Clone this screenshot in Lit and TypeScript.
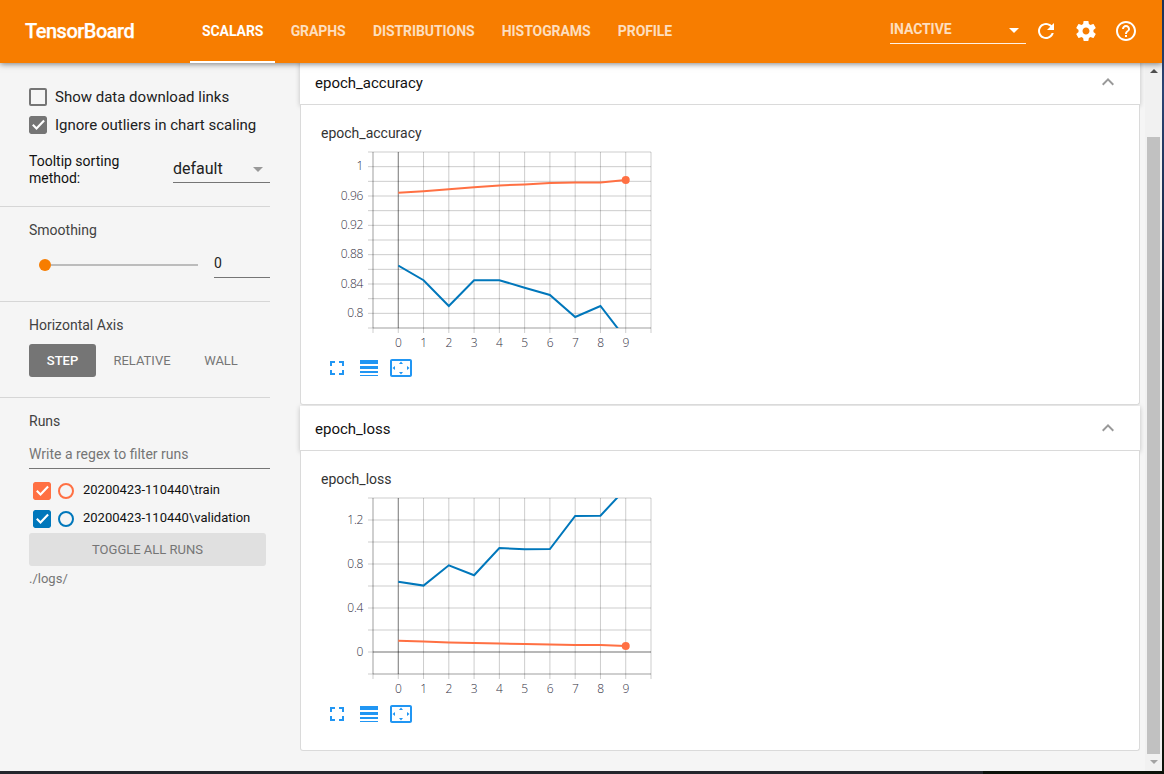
import { LitElement, html, css, svg } from "lit";
import { customElement, property, state } from "lit/decorators.js";
import { classMap } from "lit/directives/class-map.js";

type Series = { color: string; points: number[]; dot?: boolean };
type Chart = { title: string; yTicks: { label: string; y: number }[]; step: number; zero?: number; series: Series[] };

const ORANGE = "#ff7043";
const BLUE = "#0077bb";

const CHARTS: Chart[] = [
  {
    title: "epoch_accuracy",
    step: 176 / 12,
    yTicks: ["1", "0.96", "0.92", "0.88", "0.84", "0.8"].map((label, i) => ({ label, y: (176 / 12) * (1 + i * 2) })),
    series: [
      { color: BLUE, points: [113.5, 128.2, 154, 128.2, 128.2, 135.7, 143, 165, 154, 186.7] },
      { color: ORANGE, points: [40.7, 39.2, 37.2, 35.2, 33.4, 32.4, 30.9, 30.4, 30.6, 28], dot: true },
    ],
  },
  {
    title: "epoch_loss",
    step: 22,
    zero: 154,
    yTicks: ["1.2", "0.8", "0.4", "0"].map((label, i) => ({ label, y: 22 + i * 44 })),
    series: [
      { color: BLUE, points: [83.7, 87.6, 67.3, 77.3, 50, 51.3, 51, 18, 17.7, -9.4] },
      { color: ORANGE, points: [142.7, 143.6, 144.4, 145, 145.5, 146, 146.5, 147, 147, 148], dot: true },
    ],
  },
];

const DX = 278 / 11;

@customElement("line-chart")
class LineChart extends LitElement {
  @property({ attribute: false }) chart!: Chart;
  static styles = css`
    :host { display: block; }
    svg { display: block; }
    text { font: 300 12px "Open Sans", sans-serif; fill: #32313f; letter-spacing: -0.3px; }
    .grid { stroke: #000; stroke-opacity: 0.2; stroke-width: 1; }
    .axis { stroke: #000; stroke-opacity: 0.4; stroke-width: 1; }
    .edge { stroke: #000; stroke-opacity: 0.2; stroke-width: 1; }
    .line { fill: none; stroke-width: 2; }
  `;
  render() {
    const c = this.chart;
    const rows = Math.round(176 / c.step);
    return html`<svg width="340" height="210" viewBox="-52 -7 340 210">
      <defs><clipPath id="clip"><rect x="25" y="0" width="253" height="176" /></clipPath></defs>
      ${Array.from({ length: rows + 1 }, (_, i) => svg`<line class="grid" x1="-5" x2="278" y1=${i * c.step} y2=${i * c.step} />`)}
      ${Array.from({ length: 12 }, (_, i) => svg`<line class="grid" y1="0" y2="181" x1=${i * DX} x2=${i * DX} />`)}
      <line class="edge" x1="0" x2="0" y1="0" y2="176" />
      <line class="edge" x1="0" x2="278" y1="176" y2="176" />
      <line class="axis" x1=${DX} x2=${DX} y1="0" y2="176" />
      ${c.zero === undefined ? "" : svg`<line class="axis" x1="0" x2="278" y1=${c.zero} y2=${c.zero} />`}
      ${c.yTicks.map((t) => svg`<text x="-10" y=${t.y + 3.5} text-anchor="end">${t.label}</text>`)}
      ${Array.from({ length: 10 }, (_, i) => svg`<text x=${(i + 1) * DX} y="195" text-anchor="middle">${i}</text>`)}
      <g clip-path="url(#clip)">
        ${c.series.map((s) => svg`<polyline class="line" stroke=${s.color} points=${s.points.map((y, i) => `${(i + 1) * DX},${y}`).join(" ")} />`)}
      </g>
      ${c.series.filter((s) => s.dot).map((s) => svg`<circle cx=${10 * DX} cy=${s.points[9]} r="4" fill=${s.color} />`)}
    </svg>`;
  }
}

const icon = (d: string) => html`<svg class="icon" width="24" height="24" viewBox="0 0 24 24"><path d=${d} /></svg>`;
const REFRESH = "M17.65 6.35C16.2 4.9 14.21 4 12 4c-4.42 0-7.99 3.58-7.99 8s3.57 8 7.99 8c3.73 0 6.84-2.55 7.73-6h-2.08c-.82 2.33-3.04 4-5.65 4-3.31 0-6-2.69-6-6s2.69-6 6-6c1.66 0 3.14.69 4.22 1.78L13 11h7V4l-2.35 2.35z";
const SETTINGS = "M19.43 12.98c.04-.32.07-.64.07-.98s-.03-.66-.07-.98l2.11-1.65c.19-.15.24-.42.12-.64l-2-3.46c-.12-.22-.39-.3-.61-.22l-2.49 1c-.52-.4-1.08-.73-1.69-.98l-.38-2.65C14.46 2.18 14.25 2 14 2h-4c-.25 0-.46.18-.49.42l-.38 2.65c-.61.25-1.17.59-1.69.98l-2.49-1c-.23-.09-.49 0-.61.22l-2 3.46c-.13.22-.07.49.12.64l2.11 1.65c-.04.32-.07.65-.07.98s.03.66.07.98l-2.11 1.65c-.19.15-.24.42-.12.64l2 3.46c.12.22.39.3.61.22l2.49-1c.52.4 1.08.73 1.69.98l.38 2.65c.03.24.24.42.49.42h4c.25 0 .46-.18.49-.42l.38-2.65c.61-.25 1.17-.59 1.69-.98l2.49 1c.23.09.49 0 .61-.22l2-3.46c.12-.22.07-.49-.12-.64l-2.11-1.65zM12 15.5c-1.93 0-3.5-1.57-3.5-3.5s1.57-3.5 3.5-3.5 3.5 1.57 3.5 3.5-1.57 3.5-3.5 3.5z";
const HELP = "M11 18h2v-2h-2v2zm1-16C6.48 2 2 6.48 2 12s4.48 10 10 10 10-4.48 10-10S17.52 2 12 2zm0 18c-4.41 0-8-3.59-8-8s3.59-8 8-8 8 3.59 8 8-3.59 8-8 8zm0-14c-2.21 0-4 1.79-4 4h2c0-1.1.9-2 2-2s2 .9 2 2c0 2-3 1.75-3 5h2c0-2.25 3-2.5 3-5 0-2.21-1.79-4-4-4z";
const DROP = "M7 10l5 5 5-5z";
const FULL = "M7 14H5v5h5v-2H7v-3zm-2-4h2V7h3V5H5v5zm12 7h-3v2h5v-5h-2v3zM14 5v2h3v3h2V5h-5z";
const WEIGHT = "M3 17h18v-2H3v2zm0 3h18v-1H3v1zm0-7h18v-3H3v3zm0-9v4h18V4H3z";
const FIT = "M12.01 5.5L10 8h4l-1.99-2.5zM18 10v4l2.5-1.99L18 10zM6 10l-2.5 2.01L6 14v-4zm8 6h-4l2.01 2.5L14 16zm7-13H3c-1.1 0-2 .9-2 2v14c0 1.1.9 2 2 2h18c1.1 0 2-.9 2-2V5c0-1.1-.9-2-2-2zm0 16.01H3V4.99h18v14.02z";
const LESS = "M12 8l-6 6 1.41 1.41L12 10.83l4.59 4.58L18 14z";

@customElement("app-root")
class AppRoot extends LitElement {
  @state() tab = "SCALARS";

  static styles = css`
    :host { display: block; width: 1164px; height: 774px; overflow: hidden; font-family: Roboto, sans-serif; font-size: 14px; color: #212121; }
    * { box-sizing: border-box; }
    .desktop { width: 1164px; height: 774px; padding: 0 2px 3px 0; background: linear-gradient(90deg, #23262c 983px, transparent 983px) bottom / 100% 3px no-repeat, linear-gradient(#1d2f55 0, #2b4474 90px, #1b2c4d 220px, #0b121c 330px, #0d160c 560px, #0c120a 774px); }
    .window { width: 1162px; height: 771px; background: #f5f5f5; display: flex; flex-direction: column; overflow: hidden; }
    .icon { display: block; flex: none; fill: currentColor; }
    header { height: 63px; flex: none; background: #f77d00; color: #fff; display: flex; padding: 0 24px 0 25px; box-shadow: 0 1px 6px rgba(0,0,0,.5); position: relative; z-index: 2; }
    .brand { width: 165px; font-size: 20px; font-weight: 500; line-height: 62px; letter-spacing: -0.5px; -webkit-text-stroke: 0.25px #fff; }
    nav { display: flex; gap: 3.3px; flex: 1; }
    .tab { height: 63px; padding: 0 12px; line-height: 62px; font-weight: 700; letter-spacing: -0.08px; border-bottom: 2px solid transparent; color: rgba(255,255,255,.75); }
    .tab.on { color: #fff; border-color: #fff; }
    .reload { width: 136px; height: 26px; margin: 18px 8px 0 0; border-bottom: 1px solid rgba(255,255,255,.9); display: flex; justify-content: space-between; line-height: 23px; font-weight: 700; letter-spacing: -0.08px; }
    .reload span { color: rgba(255,255,255,.75); }
    .tools { display: flex; gap: 16px; padding-top: 19px; }
    .body { flex: 1; display: flex; min-height: 0; }
    aside { width: 300px; flex: none; padding-right: 30px; }
    section { padding-left: 29px; border-bottom: 1px solid #d6d6d6; }
    .s1 { height: 144px; padding-top: 20px; }
    .s2 { height: 95px; padding-top: 13px; }
    .s3 { height: 96px; padding-top: 13px; }
    .s4 { border: 0; padding-top: 13px; }
    .check { height: 28px; display: flex; align-items: center; gap: 8px; font-size: 15px; }
    .box { width: 18px; height: 18px; flex: none; border: 2px solid #757575; border-radius: 2px; display: block; }
    .box.on { border: 0; }
    .sort { display: flex; justify-content: space-between; padding-top: 14px; color: #111; }
    .sort-label { width: 110px; line-height: 17px; font-size: 14px; }
    .select { width: 97px; height: 30px; border-bottom: 1px solid #757575; font-size: 16px; line-height: 31px; display: flex; justify-content: space-between; align-items: flex-start; color: #212121; }
    .select .icon { color: #999; margin-top: 4px; }
    .head { line-height: 20px; color: #424242; }
    .smooth { display: flex; align-items: flex-start; }
    .slider { display: flex; align-items: center; width: 159px; height: 12px; margin: 19px 16px 0 10px; }
    .knob { width: 12px; height: 12px; border-radius: 50%; background: #f77d00; }
    .track { flex: 1; height: 2px; background: #bcbcbc; }
    .num { width: 56px; height: 38px; border-bottom: 1px solid #757575; line-height: 47px; }
    .axis { display: flex; margin-top: 9px; height: 33px; line-height: 33px; color: #757575; font-size: 13px; text-align: center; }
    .axis .step { width: 67px; background: #757575; color: #fff; border-radius: 3px; font-weight: 500; }
    .axis .rel { width: 92px; }
    .axis .wall { width: 66px; }
    .filter { margin-top: 10px; height: 28px; line-height: 26px; color: #757575; border-bottom: 1px solid #757575; margin-bottom: 7px; }
    .run { height: 28px; padding-left: 4px; display: flex; align-items: center; font-size: 13px; color: #111; }
    .run-name { margin-bottom: 2px; }
    .ring { width: 16px; height: 16px; border: 2px solid; border-radius: 50%; margin: 2px 9px 0 7px; }
    .run .box { margin: 2px 0 0; }
    .toggle { width: 237px; height: 33px; margin-top: 1px; background: #e0e0e0; color: #757575; font-size: 13px; line-height: 33px; text-align: center; border-radius: 3px; }
    .logs { color: #757575; font-size: 13px; line-height: 26px; }
    main { width: 845px; flex: none; padding-right: 5px; }
    .bar { height: 45px; background: #fff; border-bottom: 1px solid #dadada; box-shadow: 0 1px 5px rgba(0,0,0,.22); padding: 0 20px 0 15px; display: flex; align-items: center; justify-content: space-between; font-size: 15px; color: #111; margin-top: 1px; }
    .bar .icon { color: #999; }
    .bar-title { padding-top: 2px; }
    .group:first-child .bar { margin-top: -3px; }
    .pane { height: 300px; background: #fff; border: 1px solid #dadada; border-top: 0; border-radius: 0 0 3px 3px; padding: 18px 0 0 20px; position: relative; }
    .pane-title { line-height: 20px; height: 22px; color: #333; }
    .actions { display: flex; gap: 8px; color: #2196f3; padding: 1px 0 0 4px; }
    .scroll { width: 17px; background: #f1f1f1; padding: 6px 2px 5px; display: flex; flex-direction: column; align-items: center; }
    .thumb { width: 13px; height: 617px; background: #c1c1c1; margin: 64px 0 6px; }
    .up, .down { border: 4px solid transparent; width: 0; height: 0; }
    .up { border-bottom-color: #505050; border-top: 0; }
    .down { border-top-color: #a3a3a3; border-bottom: 0; }
  `;

  box(color = "") {
    return color
      ? html`<svg class="box on" viewBox="0 0 18 18"><rect width="18" height="18" rx="2" fill=${color} /><path d="M3.8 8.8l3.7 3.7 7.6-8" fill="none" stroke="#fff" stroke-width="2.1" /></svg>`
      : html`<span class="box"></span>`;
  }

  render() {
    return html`<div class="desktop"><div class="window">
      <header>
        <div class="brand">TensorBoard</div>
        <nav>${["SCALARS", "GRAPHS", "DISTRIBUTIONS", "HISTOGRAMS", "PROFILE"].map(
          (t) => html`<div class=${classMap({ tab: true, on: t === this.tab })} @click=${() => (this.tab = t)}>${t}</div>`)}</nav>
        <div class="reload"><span>INACTIVE</span>${icon(DROP)}</div>
        <div class="tools">${icon(REFRESH)}${icon(SETTINGS)}${icon(HELP)}</div>
      </header>
      <div class="body">
        <aside>
          <section class="s1">
            <div class="check">${this.box()}<span>Show data download links</span></div>
            <div class="check">${this.box("#757575")}<span>Ignore outliers in chart scaling</span></div>
            <div class="sort"><div class="sort-label">Tooltip sorting method:</div><div class="select"><span>default</span>${icon(DROP)}</div></div>
          </section>
          <section class="s2">
            <div class="head">Smoothing</div>
            <div class="smooth"><div class="slider"><div class="knob"></div><div class="track"></div></div><div class="num">0</div></div>
          </section>
          <section class="s3">
            <div class="head">Horizontal Axis</div>
            <div class="axis"><div class="step">STEP</div><div class="rel">RELATIVE</div><div class="wall">WALL</div></div>
          </section>
          <section class="s4">
            <div class="head">Runs</div>
            <div class="filter">Write a regex to filter runs</div>
            ${[["train", ORANGE], ["validation", BLUE]].map(([n, c]) => html`<div class="run">${this.box(c)}<span class="ring" style="color:${c}"></span><span class="run-name">20200423-110440\\${n}</span></div>`)}
            <div class="toggle">TOGGLE ALL RUNS</div>
            <div class="logs">./logs/</div>
          </section>
        </aside>
        <main>
          ${CHARTS.map((c) => html`<div class="group">
            <div class="bar"><span class="bar-title">${c.title}</span>${icon(LESS)}</div>
            <div class="pane">
              <div class="pane-title">${c.title}</div>
              <line-chart .chart=${c}></line-chart>
              <div class="actions">${icon(FULL)}${icon(WEIGHT)}${icon(FIT)}</div>
            </div>
          </div>`)}
        </main>
        <div class="scroll"><div class="up"></div><div class="thumb"></div><div class="down"></div></div>
      </div>
    </div></div>`;
  }
}
